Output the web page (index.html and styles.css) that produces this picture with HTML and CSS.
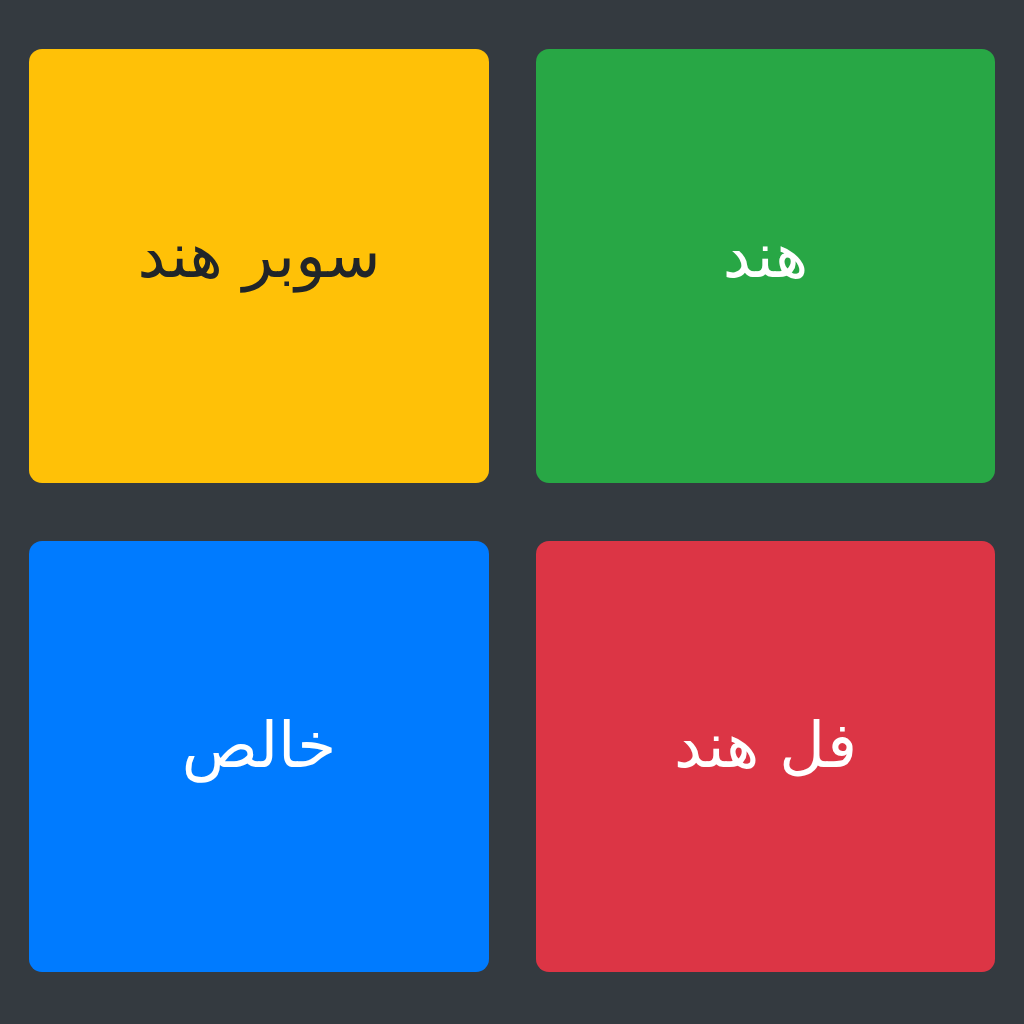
FILE: index.html
```html
<!DOCTYPE html>
<html lang="ar" dir="rtl">
<head>
<meta charset="utf-8">
<link rel="stylesheet" href="styles.css">
</head>
<body>
<main class="grid">
  <div class="card card-green">هند</div>
  <div class="card card-yellow">سوبر هند</div>
  <div class="card card-red">فل هند</div>
  <div class="card card-blue">خالص</div>
</main>
</body>
</html>
```
FILE: styles.css
```css
html, body {
  margin: 0;
  padding: 0;
  background: #343a40;
  height: 100%;
}
.grid {
  box-sizing: border-box;
  display: grid;
  grid-template-columns: 459px 460px;
  grid-template-rows: 434px 431px;
  column-gap: 47px;
  row-gap: 58px;
  padding: 49px 29px 52px 29px;
  direction: rtl;
}
.card {
  border-radius: 13px;
  display: flex;
  align-items: center;
  justify-content: center;
  font-family: "DejaVu Sans", sans-serif;
  font-size: 63px;
  color: #fff;
  padding-bottom: 22px;
  box-sizing: border-box;
}
.card-green { background: #28a745; }
.card-yellow { background: #ffc107; color: #212529; }
.card-red { background: #dc3545; }
.card-blue { background: #007bff; }
```
